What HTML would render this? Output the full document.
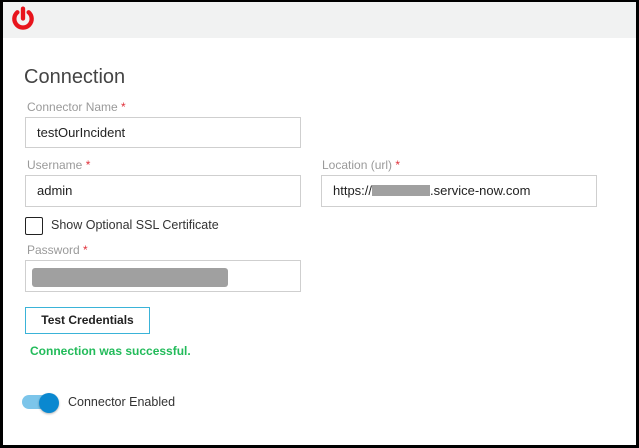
<!DOCTYPE html>
<html><head><style>
*{margin:0;padding:0;box-sizing:border-box}
body{width:639px;height:448px;background:#000;position:relative;font-family:"Liberation Sans",Arial,sans-serif;overflow:hidden}
.page{position:absolute;left:3px;top:2px;width:633px;height:443px;background:#fff}
.hdr{position:absolute;left:0;top:0;width:633px;height:36px;background:#f1f2f2}
.a{position:absolute}
.lbl{font-size:12px;color:#9a9a9a}
.lbl b{color:#e0303a;font-weight:normal}
.inp{border:1px solid #cfcfcf;background:#fff;font-size:13px;color:#222;padding-left:11px;line-height:29px}
</style></head><body>
<div class="page">
<div class="hdr">
<svg class="a" style="left:7px;top:4px" width="26" height="26" viewBox="0 0 24 24"><path d="M6.8 5.8A8 8 0 1 0 17.2 5.8" fill="none" stroke="#e8141c" stroke-width="4" stroke-linecap="round"/><path d="M12 2.5V11.5" stroke="#e8141c" stroke-width="4" stroke-linecap="round"/></svg>
</div>
<div class="a" style="left:21px;top:64px;font-size:20px;color:#444">Connection</div>
<div class="a lbl" style="left:24px;top:98px">Connector Name <b>*</b></div>
<div class="a inp" style="left:22px;top:115px;width:276px;height:31px">testOurIncident</div>
<div class="a lbl" style="left:24px;top:156px">Username <b>*</b></div>
<div class="a inp" style="left:22px;top:173px;width:276px;height:32px">admin</div>
<div class="a lbl" style="left:319px;top:156px">Location (url) <b>*</b></div>
<div class="a inp" style="left:318px;top:173px;width:276px;height:32px">https://<span style="display:inline-block;width:58px;height:11px;background:#a0a0a0;vertical-align:-1px"></span>.service-now.com</div>
<div class="a" style="left:22px;top:215px;width:18px;height:18px;border:1.5px solid #222;border-radius:2px"></div>
<div class="a" style="left:48px;top:216px;font-size:12.5px;color:#333">Show Optional SSL Certificate</div>
<div class="a lbl" style="left:24px;top:241px">Password <b>*</b></div>
<div class="a inp" style="left:22px;top:258px;width:276px;height:32px"></div>
<div class="a" style="left:29px;top:266px;width:196px;height:19px;background:#a0a0a0;border-radius:3px"></div>
<div class="a" style="left:22px;top:305px;width:125px;height:27px;border:1px solid #3ab3d8;font-size:12px;font-weight:bold;color:#222;text-align:center;line-height:25px">Test Credentials</div>
<div class="a" style="left:27px;top:342px;font-size:12px;font-weight:bold;color:#22bb5a">Connection was successful.</div>
<div class="a" style="left:19px;top:393px;width:36px;height:14px;border-radius:7px;background:#7cc5ea"></div>
<div class="a" style="left:36px;top:391px;width:20px;height:20px;border-radius:50%;background:#0a88d0;box-shadow:0 1px 2px rgba(0,0,0,.3)"></div>
<div class="a" style="left:65px;top:393px;font-size:12.5px;color:#333">Connector Enabled</div>
</div>
</body></html>
